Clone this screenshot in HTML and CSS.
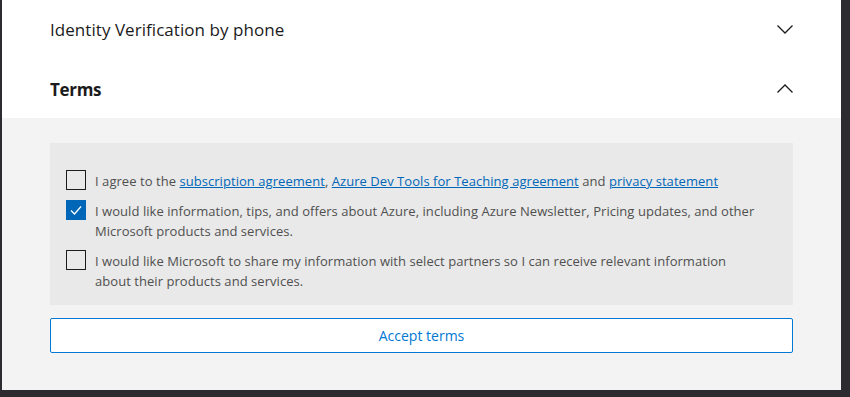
FILE: index.html
```html
<!DOCTYPE html>
<html lang="en">
<head>
    <meta charset="UTF-8">
    <meta name="viewport" content="width=device-width, initial-scale=1.0">
    <title>Terms</title>
    <link rel="stylesheet" href="styles.css">
</head>
<body>
    <div class="frame">
        <div class="panel">
            <div class="section">
                <div class="section-header">
                    <span class="section-title">Identity Verification by phone</span>
                    <svg class="chevron" width="16" height="9" viewBox="0 0 16 9">
                        <path d="M0.5 0.5 L8 8 L15.5 0.5" fill="none" stroke="#1b1b1b" stroke-width="1.3"/>
                    </svg>
                </div>
                <div class="section-header">
                    <span class="section-title bold">Terms</span>
                    <svg class="chevron" width="16" height="9" viewBox="0 0 16 9">
                        <path d="M0.5 8.5 L8 1 L15.5 8.5" fill="none" stroke="#1b1b1b" stroke-width="1.3"/>
                    </svg>
                </div>
            </div>
            <div class="terms-body">
                <div class="terms-box">
                    <label class="check-row">
                        <span class="checkbox"></span>
                        <span class="check-text">I agree to the <a href="#">subscription agreement</a>, <a href="#">Azure Dev Tools for Teaching agreement</a> and <a href="#">privacy statement</a></span>
                    </label>
                    <label class="check-row">
                        <span class="checkbox checked">
                            <svg width="14" height="14" viewBox="0 0 14 14">
                                <path d="M2 7.5 L5.5 11 L12 3.5" fill="none" stroke="#fff" stroke-width="1.3"/>
                            </svg>
                        </span>
                        <span class="check-text">I would like information, tips, and offers about Azure, including Azure Newsletter, Pricing updates, and other Microsoft products and services.</span>
                    </label>
                    <label class="check-row">
                        <span class="checkbox"></span>
                        <span class="check-text">I would like Microsoft to share my information with select partners so I can receive relevant information about their products and services.</span>
                    </label>
                </div>
                <button class="accept">Accept terms</button>
            </div>
        </div>
    </div>
</body>
</html>
```

FILE: styles.css
```css
html, body {
    margin: 0;
    padding: 0;
    height: 100%;
}
body {
    font-family: "Open Sans", "Noto Sans", Arial, sans-serif;
    background-color: #2b2b30;
    overflow: hidden;
}
.frame {
    padding-left: 2px;
    width: 839px;
    height: 390px;
}
.panel {
    background-color: #f3f3f4;
    height: 390px;
}
.section {
    background-color: white;
    padding: 0 48px;
    height: 118px;
}
.section-header {
    display: flex;
    align-items: center;
    justify-content: space-between;
    height: 59px;
}
.section-title {
    font-size: 17px;
    color: #1b1b1b;
    letter-spacing: 0.05px;
}
.section-title.bold {
    font-weight: bold;
    letter-spacing: -0.3px;
    padding-top: 2px;
}
.chevron {
    display: block;
}
.terms-body {
    padding: 25px 48px 0;
}
.terms-box {
    background-color: #e9e9e9;
    padding: 27px 16px 14px;
    display: flex;
    flex-direction: column;
    gap: 10px;
    height: 121px;
}
.check-row {
    display: flex;
    align-items: flex-start;
    gap: 9px;
}
.checkbox {
    flex: none;
    width: 18px;
    height: 18px;
    border: 1px solid #1b1b1b;
    display: flex;
    align-items: center;
    justify-content: center;
}
.checkbox.checked {
    background-color: #0067b8;
    border-color: #0067b8;
}
.check-text {
    font-size: 13px;
    line-height: 20px;
    color: #505050;
    max-width: 665px;
    padding-top: 1px;
    margin-bottom: -1px;
    letter-spacing: 0.05px;
}
.check-text a {
    color: #0067b8;
}
.accept {
    display: block;
    width: 100%;
    margin-top: 13px;
    height: 35px;
    background-color: white;
    border: 1px solid #0078d4;
    border-radius: 2px;
    color: #0078d4;
    font-family: inherit;
    font-size: 14px;
    cursor: pointer;
}
```
